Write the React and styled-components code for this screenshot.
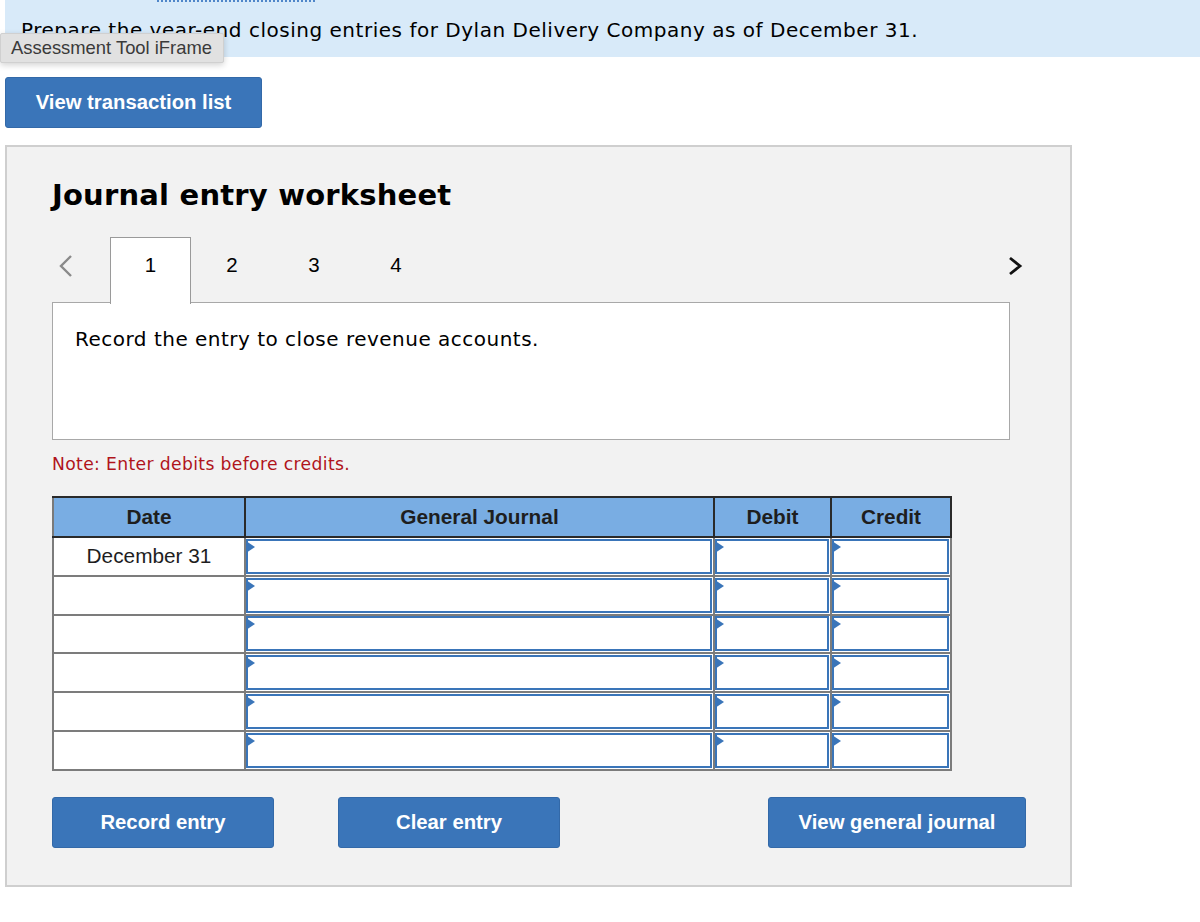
import React from "react";
import styled, { createGlobalStyle } from "styled-components";

const Global = createGlobalStyle`
  html, body { margin: 0; padding: 0; background: #fff; }
  body { font-family: "DejaVu Sans", Verdana, sans-serif; color: #000; }
`;

const Page = styled.div`
  position: relative;
  width: 1200px;
  height: 922px;
  overflow: hidden;
`;

const Banner = styled.div`
  margin-left: 5px;
  height: 57px;
  background: #d8eaf9;
  padding-left: 16px;
  box-sizing: border-box;
`;

const DottedRule = styled.div`
  margin-left: 136px;
  width: 158px;
  border-top: 2px dotted #4f86c9;
  height: 0;
`;

const Prompt = styled.p`
  margin: 0;
  padding-top: 15px;
  font-size: 20px;
  line-height: 26px;
  letter-spacing: 0.52px;
`;

const Tooltip = styled.div`
  position: absolute;
  left: 0;
  top: 33px;
  height: 28px;
  padding: 0 11px 0 10px;
  display: flex;
  align-items: center;
  background: #e1e1e1;
  border: 1px solid #d0d0d0;
  border-radius: 2px;
  box-shadow: 0 2px 6px rgba(0,0,0,0.18);
  font-family: "Liberation Sans", Arial, sans-serif;
  font-size: 18.4px;
  color: #3a3a3a;
`;

const Blue = styled.button`
  height: 51px;
  width: ${p => p.$w}px;
  background: #3a75b9;
  border: 1px solid #3369a8;
  border-radius: 3px;
  color: #fff;
  font-family: "Liberation Sans", Arial, sans-serif;
  font-weight: bold;
  font-size: 20.3px;
  padding: 0;
  cursor: pointer;
`;

const TopBar = styled.div`
  padding: 20px 0 0 5px;
`;

const Panel = styled.div`
  margin: 17px 0 0 5px;
  width: 1067px;
  height: 742px;
  box-sizing: border-box;
  background: #f2f2f2;
  border: 2px solid #cfcfcf;
  padding: 0 0 0 45px;
`;

const Heading = styled.h2`
  margin: 0;
  padding-top: 30px;
  font-size: 29px;
  font-weight: bold;
  line-height: 36px;
  letter-spacing: 0.2px;
`;

const TabRow = styled.div`
  margin-top: 24px;
  display: flex;
  align-items: stretch;
  height: 65px;
  width: 975px;
`;

const Chevron = styled.div`
  width: 58px;
  display: flex;
  align-items: center;
  justify-content: flex-start;
  padding-left: 6px;
  padding-bottom: 8px;
  box-sizing: border-box;
`;

const Tab = styled.div`
  width: ${p => (p.$active ? 81 : 82)}px;
  box-sizing: border-box;
  display: flex;
  align-items: center;
  justify-content: center;
  padding-bottom: ${p => (p.$active ? 13 : 10)}px;
  font-family: "Liberation Sans", Arial, sans-serif;
  font-size: 20.5px;
  background: ${p => (p.$active ? "#fff" : "transparent")};
  border: ${p => (p.$active ? "1.5px solid #9a9a9a" : "none")};
  border-bottom: none;
  margin-bottom: ${p => (p.$active ? "-2px" : "0")};
  position: relative;
  z-index: 1;
`;

const Spacer = styled.div`
  flex: 1;
`;

const NextChevron = styled.div`
  width: 20px;
  display: flex;
  align-items: center;
  padding-bottom: 8px;
`;

const ContentBox = styled.div`
  width: 958px;
  height: 138px;
  box-sizing: border-box;
  background: #fff;
  border: 1.5px solid #a8a8a8;
  padding: 22px 0 0 22px;
  font-size: 20px;
  letter-spacing: 0.49px;
  line-height: 28px;
`;

const Note = styled.p`
  margin: 14px 0 0 0;
  color: #b0141b;
  font-size: 17.2px;
  letter-spacing: 0.35px;
  line-height: 20px;
`;

const Table = styled.table`
  margin-top: 22px;
  border-collapse: collapse;
  table-layout: fixed;
  width: 898px;
  font-family: "Liberation Sans", Arial, sans-serif;
`;

const Th = styled.th`
  height: 40px;
  padding: 0;
  background: #79ade3;
  border: 2px solid #2a2a2a;
  border-left-color: ${p => (p.$first ? "#7a7a7a" : "#2a2a2a")};
  font-size: 20.8px;
  font-weight: bold;
  color: #1e1e1e;
  text-align: center;
  box-sizing: border-box;
`;

const DateCell = styled.td`
  height: 38.8px;
  padding: 0;
  background: #fff;
  border: 2px solid #7c7c7c;
  font-size: 20.8px;
  color: #1e1e1e;
  text-align: center;
  box-sizing: border-box;
`;

const InputCell = styled.td`
  height: 38.8px;
  padding: 0;
  border: 2px solid #7c7c7c;
  background: #fff;
  box-sizing: border-box;
`;

const Field = styled.div`
  position: relative;
  height: 35px;
  box-sizing: border-box;
  border: 2px solid #3a75b9;
  margin: 0 1px 0 0;
  background: #fff;
  &::before {
    content: "";
    position: absolute;
    left: -2px;
    top: 0px;
    border-left: 9px solid #3a75b9;
    border-top: 6px solid transparent;
    border-bottom: 6px solid transparent;
  }
`;

const ButtonRow = styled.div`
  margin-top: 26px;
  width: 974px;
  display: flex;
  align-items: center;
`;

const Gap = styled.div`
  width: ${p => p.$w}px;
`;

const LeftChev = () => (
  <svg width="16" height="24" viewBox="0 0 16 24">
    <polyline points="13,2 3,12 13,22" fill="none" stroke="#8a8a8a" strokeWidth="2.4" />
  </svg>
);

const RightChev = () => (
  <svg width="16" height="20" viewBox="0 0 16 20">
    <polyline points="3,2 13,10 3,18" fill="none" stroke="#111" strokeWidth="2.8" />
  </svg>
);

const rows = ["December 31", "", "", "", "", ""];

export default function App() {
  return (
    <Page>
      <Global />
      <Banner>
        <DottedRule />
        <Prompt>Prepare the year-end closing entries for Dylan Delivery Company as of December 31.</Prompt>
      </Banner>
      <Tooltip>Assessment Tool iFrame</Tooltip>
      <TopBar>
        <Blue $w={257}>View transaction list</Blue>
      </TopBar>
      <Panel>
        <Heading>Journal entry worksheet</Heading>
        <TabRow>
          <Chevron><LeftChev /></Chevron>
          <Tab $active>1</Tab>
          <Tab>2</Tab>
          <Tab>3</Tab>
          <Tab>4</Tab>
          <Spacer />
          <NextChevron><RightChev /></NextChevron>
        </TabRow>
        <ContentBox>Record the entry to close revenue accounts.</ContentBox>
        <Note>Note: Enter debits before credits.</Note>
        <Table>
          <colgroup>
            <col style={{ width: 192 }} />
            <col style={{ width: 469 }} />
            <col style={{ width: 117 }} />
            <col style={{ width: 120 }} />
          </colgroup>
          <thead>
            <tr>
              <Th $first>Date</Th>
              <Th>General Journal</Th>
              <Th>Debit</Th>
              <Th>Credit</Th>
            </tr>
          </thead>
          <tbody>
            {rows.map((d, i) => (
              <tr key={i}>
                <DateCell>{d}</DateCell>
                <InputCell><Field /></InputCell>
                <InputCell><Field /></InputCell>
                <InputCell><Field /></InputCell>
              </tr>
            ))}
          </tbody>
        </Table>
        <ButtonRow>
          <Blue $w={222}>Record entry</Blue>
          <Gap $w={64} />
          <Blue $w={222}>Clear entry</Blue>
          <Spacer />
          <Blue $w={258}>View general journal</Blue>
        </ButtonRow>
      </Panel>
    </Page>
  );
}
